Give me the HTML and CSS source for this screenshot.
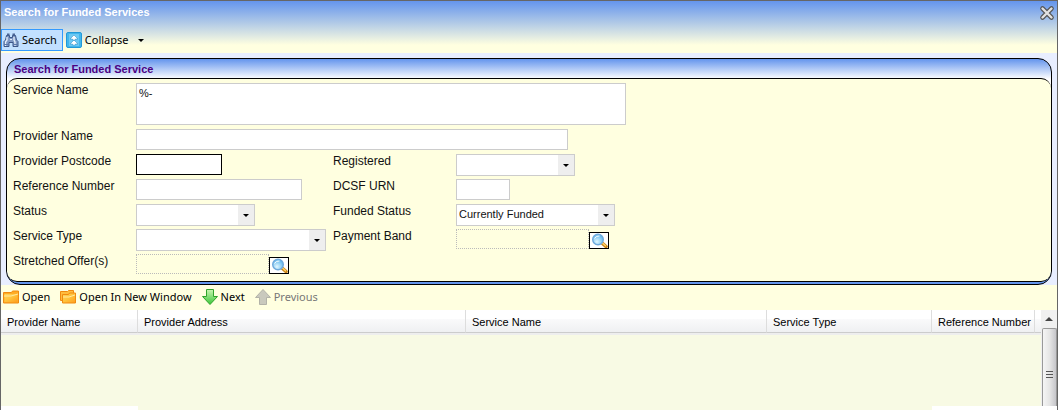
FILE: index.html
```html
<!DOCTYPE html>
<html lang="en">
<head>
<meta charset="utf-8">
<title>Search for Funded Services</title>
<link rel="stylesheet" href="styles.css">
</head>
<body>
<svg class="defs" aria-hidden="true">
  <defs>
    <linearGradient id="folderFill" x1="0" y1="0" x2="1" y2="1"><stop offset="0" stop-color="#ffd65c"/><stop offset=".5" stop-color="#ffc23a"/><stop offset="1" stop-color="#ff9d1e"/></linearGradient>
    <linearGradient id="greenFill" x1="0" y1="0" x2="0" y2="1"><stop offset="0" stop-color="#c8f5b0"/><stop offset="1" stop-color="#3cc63a"/></linearGradient>
    <radialGradient id="lensFill" cx=".4" cy=".7" r=".7"><stop offset="0" stop-color="#e2f7ff"/><stop offset="1" stop-color="#58b4ec"/></radialGradient>
    <symbol id="lens" viewBox="0 0 18 15">
      <path d="M12 10l4 3.500" stroke="#c98418" stroke-width="3.500" stroke-linecap="round"/>
      <path d="M12.500 10l3 2.700" stroke="#ffd367" stroke-width="1.500" stroke-linecap="round"/>
      <circle cx="8" cy="6.500" r="5.300" fill="url(#lensFill)" stroke="#6fa9dc" stroke-width="1.400"/>
      <path d="M4.500 5.500Q6 2.500 9.500 3" stroke="#fff" fill="none"/>
    </symbol>
  </defs>
</svg>
<main class="window">
  <header class="top">
    <div class="titlebar">
      <h1 class="title">Search for Funded Services</h1>
      <button class="close" type="button" aria-label="Close">
        <svg width="16" height="16" viewBox="0 0 16 16"><path d="M3.500 3.500l9 9M12.500 3.500l-9 9" stroke="#555" stroke-width="4.600" stroke-linecap="round"/><path d="M3.500 3.500l9 9M12.500 3.500l-9 9" stroke="#e2e2e2" stroke-width="2.400" stroke-linecap="round"/></svg>
      </button>
    </div>
    <div class="toolbar">
      <button class="tool tool-active" type="button">
        <svg width="16" height="16" viewBox="0 0 16 16"><path d="M3.500 3.500h3v2h3v-2h3l1 4.500 1.500 1.500v5h-5v-4h-4v4H1v-5L2.500 8z" fill="#7f98c4" stroke="#3d5688"/><path d="M4 1.500h2.500v2H4zM9.500 1.500H12v2H9.500z" fill="#4b6596"/><path d="M4 5v3L2.500 10v4M11 5v3l1 2v4" stroke="#e5effb" stroke-width="1.300"/><path d="M7 7.500h2" stroke="#dfe9f8"/><path d="M1 12.500h5M10 12.500h5" stroke="#5a76a8"/></svg>
        <span>Search</span>
      </button>
      <button class="tool tool-menu" type="button">
        <svg width="16" height="16" viewBox="0 0 16 16"><rect x=".5" y=".5" width="15" height="15" rx="1.500" fill="#42b6ec" stroke="#2299d8"/><rect x="3" y="2" width="10" height="12" fill="#6cc9f3"/><path d="M8 3l4 4H9.500v1h-3v-1H4zM8 8l4 4H9.500v1h-3v-1H4z" fill="#fff" stroke="#278bc4" stroke-width=".5"/></svg>
        <span>Collapse</span>
        <svg class="caret" width="6" height="3" viewBox="0 0 6 3"><path d="M0 0h6L3 3z"/></svg>
      </button>
    </div>
  </header>

  <section class="search">
    <div class="panel">
      <h2 class="panel-title">Search for Funded Service</h2>
      <form class="form">
        <label for="service">Service Name</label>
        <textarea class="field wide service" id="service">%-</textarea>
        <label for="provider">Provider Name</label>
        <input class="field wide provider" id="provider" type="text">
        <label for="postcode">Provider Postcode</label>
        <input class="field postcode" id="postcode" type="text">
        <label for="registered">Registered</label>
        <div class="select medium"><select id="registered"><option></option></select><svg class="caret" width="6" height="3" viewBox="0 0 6 3"><path d="M0 0h6L3 3z"/></svg></div>
        <label for="reference">Reference Number</label>
        <input class="field reference" id="reference" type="text">
        <label for="urn">DCSF URN</label>
        <input class="field urn" id="urn" type="text">
        <label for="status">Status</label>
        <div class="select medium"><select id="status"><option></option></select><svg class="caret" width="6" height="3" viewBox="0 0 6 3"><path d="M0 0h6L3 3z"/></svg></div>
        <label for="funded">Funded Status</label>
        <div class="select funded"><select id="funded"><option>Currently Funded</option></select><svg class="caret" width="6" height="3" viewBox="0 0 6 3"><path d="M0 0h6L3 3z"/></svg></div>
        <label for="type">Service Type</label>
        <div class="select type"><select id="type"><option></option></select><svg class="caret" width="6" height="3" viewBox="0 0 6 3"><path d="M0 0h6L3 3z"/></svg></div>
        <label for="band">Payment Band</label>
        <div class="lookup"><input id="band" type="text" readonly><button type="button" aria-label="Find payment band"><svg width="18" height="15"><use href="#lens"/></svg></button></div>
        <label for="offer">Stretched Offer(s)</label>
        <div class="lookup"><input id="offer" type="text" readonly><button type="button" aria-label="Find stretched offer"><svg width="18" height="15"><use href="#lens"/></svg></button></div>
      </form>
    </div>
  </section>

  <div class="actions">
    <button class="action" type="button">
      <svg width="16" height="16" viewBox="0 0 16 16"><path d="M.5 3.500h8l1-1.500h6v12H.5z" fill="#ffac25" stroke="#f08a10"/><path d="M1.500 5h13v8h-13z" fill="url(#folderFill)"/><path d="M1 7q7 1 14-2" stroke="#ffe9a0" fill="none"/></svg>
      <span>Open</span>
    </button>
    <button class="action" type="button">
      <svg width="16" height="16" viewBox="0 0 16 16"><path d="M.5 2.500h7l1-1h5v10H.5z" fill="#ffbd3e" stroke="#f08a10"/><path d="M2.500 5.500h6l1-1.500h6v10h-13z" fill="url(#folderFill)" stroke="#f08a10"/><path d="M3 8q6 1 12-2" stroke="#ffe9a0" fill="none"/></svg>
      <span>Open In New Window</span>
    </button>
    <button class="action" type="button">
      <svg width="16" height="16" viewBox="0 0 16 16"><path d="M4.500.5h7v7h4L8 15.500.5 7.500h4z" fill="url(#greenFill)" stroke="#2fa32b"/></svg>
      <span>Next</span>
    </button>
    <button class="action" type="button" disabled>
      <svg width="16" height="16" viewBox="0 0 16 16"><path d="M4.500 15.500h7v-7h4L8 .5.5 8.500h4z" fill="#c9c9bd" stroke="#b2b2a8"/></svg>
      <span>Previous</span>
    </button>
  </div>

  <div class="results">
    <table class="grid">
      <colgroup><col class="c-provider"><col class="c-address"><col class="c-service"><col class="c-type"><col class="c-reference"><col class="c-rest"></colgroup>
      <thead><tr><th>Provider Name</th><th>Provider Address</th><th>Service Name</th><th>Service Type</th><th>Reference Number</th><th></th></tr></thead>
      <tbody><tr><td class="short"></td><td></td><td></td><td></td><td class="short"></td><td class="short"></td></tr></tbody>
    </table>
    <div class="scrollbar">
      <svg class="scroll-up" width="8" height="4" viewBox="0 0 8 4"><path d="M4 0l4 4H0z" fill="#444"/></svg>
      <div class="thumb"><i></i><i></i><i></i></div>
    </div>
  </div>
</main>
</body>
</html>
```
FILE: styles.css
```css
* { box-sizing: border-box; }

body {
  margin: 0;
  background: #fff;
  color: #111;
  font: 12px/14px "Liberation Sans", Arial, sans-serif;
}

svg { display: block; flex: none; fill: none; }
.caret { fill: #000; }
.defs { position: absolute; width: 0; height: 0; }
button { padding: 0; margin: 0; border: 0; background: none; color: inherit; }
input, select, textarea { margin: 0; font: inherit; color: inherit; }
h1, h2 { margin: 0; font-size: 11px; line-height: 14px; }

.window {
  display: flex;
  flex-direction: column;
  min-height: 100vh;
  margin-right: 2px;
  border: 1px solid #666;
  border-bottom: 0;
  background: #ffffe0;
}

.top { background: linear-gradient(#6495ed, #ffffe0 44px); }
.titlebar {
  display: flex;
  justify-content: space-between;
  height: 28px;
  padding: 4px 2px 0 3px;
}
.title { color: #fff; }
.close { height: 16px; }

.toolbar { display: flex; height: 24px; }
.tool, .action {
  display: flex;
  align-items: center;
  gap: 3px;
  color: #000;
  font: 11px/16px "Noto Sans", sans-serif;
}
.tool { height: 22px; padding: 0 3px; }
.tool-active { padding: 0 5px 0 1px; border: 1px solid #3399ff; background: #c2e0ff; }
.tool .caret { margin-left: 6px; }

.search { padding: 5px 5px 0; background: #e8eeff; }
.panel {
  padding-bottom: 2px;
  border: 1px solid #000;
  border-radius: 14px;
  overflow: hidden;
  background: linear-gradient(#6495ed, #fff 20px, #fff 40px, #6495ed 60px);
}
.panel-title { height: 19px; padding: 3px 7px 0; color: #4b0082; }
.form {
  display: grid;
  grid-template-columns: 123px 197px 123px 1fr;
  grid-template-rows: 46px repeat(6, 25px);
  align-items: start;
  padding: 4px 6px 2px;
  border-top: 1px solid #000;
  border-bottom: 1px solid #000;
  border-radius: 10px;
  background: #ffffe0;
}

.field {
  height: 21px;
  padding: 2px;
  border: 1px solid #ccc;
  background: #fff;
  font-size: 11px;
  outline: 0;
}
.wide { grid-column: 2 / -1; }
.service { width: 490px; height: 42px; resize: none; }
.provider { width: 432px; }
.postcode { width: 86px; border-color: #000; }
.reference { width: 166px; }
.urn { width: 54px; }

.select { position: relative; height: 22px; }
.select select {
  appearance: none;
  width: 100%;
  height: 100%;
  padding: 0 18px 2px 2px;
  border: 1px solid #ccc;
  border-radius: 0;
  background: linear-gradient(#eee, #eee) right / 16px 100% no-repeat #fff;
  font-size: 11px;
}
.select .caret { position: absolute; right: 6px; top: 10px; pointer-events: none; }
.medium { width: 119px; }
.funded { width: 159px; }
.type { width: 190px; }

.lookup { display: flex; align-items: flex-start; }
.lookup input { width: 133px; height: 20px; border: 1px dotted #bbb; background: transparent; }
.lookup button { margin-top: 3px; border: 1px solid #000; background: #fff; }

.actions { display: flex; align-items: center; gap: 10px; height: 25px; padding: 0 2px 2px; }
.action:disabled { color: #777; }

.results { display: flex; flex: 1; }
.grid {
  flex: 1;
  width: 100%;
  min-width: 0;
  table-layout: fixed;
  border-collapse: separate;
  border-spacing: 0;
  font-size: 11px;
}
.c-provider { width: 137px; }
.c-address { width: 328px; }
.c-service { width: 301px; }
.c-type { width: 165px; }
.c-reference { width: 103px; }
th {
  height: 23px;
  padding: 5px 6px 3px;
  border-right: 1px solid #ddd;
  border-bottom: 1px solid #ccc;
  background: linear-gradient(#fff 9px, #fafafb 9px, #eff0f2);
  color: #000;
  font-weight: 400;
  line-height: 14px;
  text-align: left;
  white-space: nowrap;
}
th:last-child { padding: 0; border-right: 0; }
td { height: 100%; padding: 0; border-top: 2px solid #eee; background: #f8fae4; }
.short { border-bottom: 4px solid #fff; }

.scrollbar {
  display: flex;
  flex-direction: column;
  align-items: center;
  width: 16px;
  border-bottom: 4px solid #fff;
  background: #f0f0f0;
}
.scroll-up { margin: 7px 0; }
.thumb {
  display: flex;
  flex: 1;
  flex-direction: column;
  align-items: center;
  justify-content: center;
  gap: 2px;
  width: 15px;
  padding-top: 14px;
  border: 1px solid #999;
  border-bottom: 0;
  border-radius: 2px 2px 0 0;
  background: linear-gradient(90deg, #f5f5f5, #e6e6e6 50%, #c6c6ca);
}
.thumb i { width: 7px; height: 1px; background: #555; }
```
